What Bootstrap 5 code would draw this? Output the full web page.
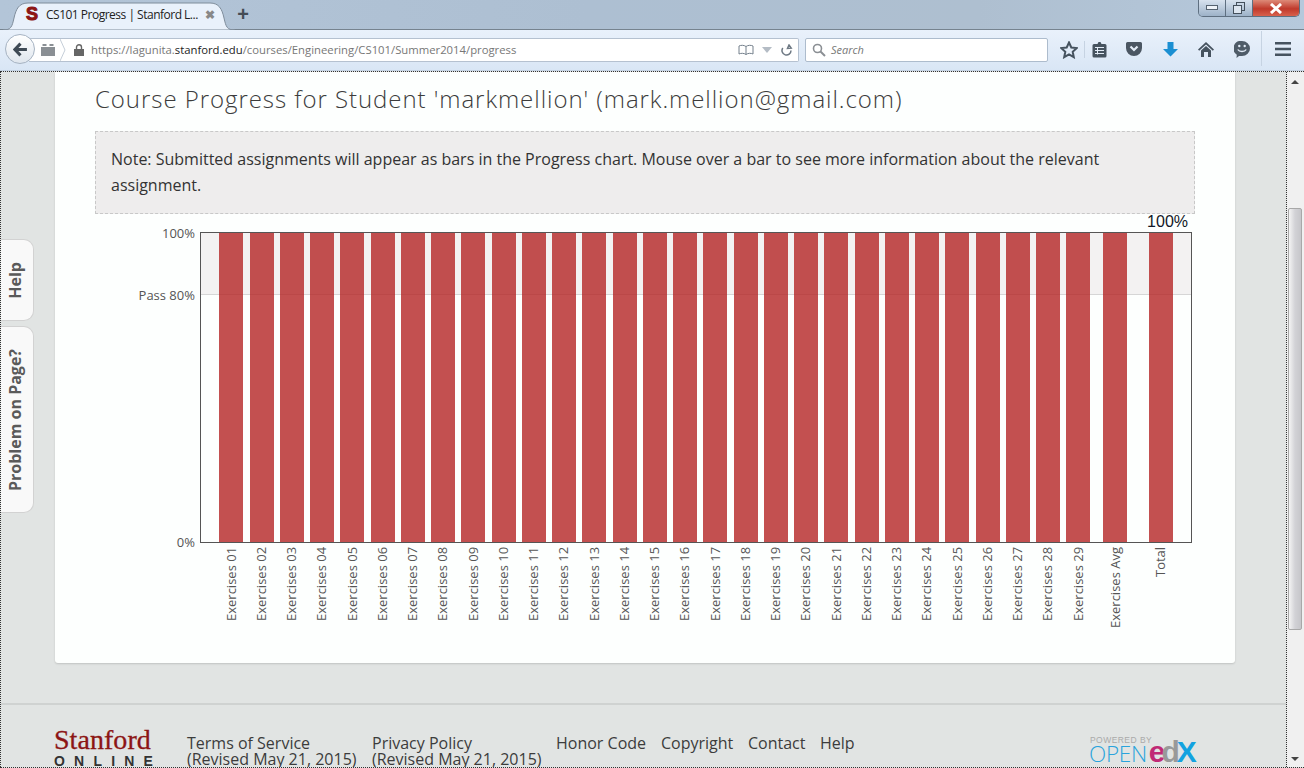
<!DOCTYPE html>
<html lang="en">
<head>
<meta charset="UTF-8" />
<title>CS101 Progress | Stanford Lagunita</title>
<link rel="stylesheet" href="https://cdn.jsdelivr.net/npm/bootstrap@5.3.7/dist/css/bootstrap.min.css" />
<style>
html, body { height: 768px; overflow: hidden; }
body { font-family: "Open Sans", sans-serif; background: #e1e4e3; color: #3c3c3c; }

/* browser frame */
.tabstrip { height: 30px; background: linear-gradient(90deg, #b3c5d8 0, #adbfd2 45%, #aebfd0 75%, #b6c9dc 100%); border-bottom: 1px solid #76838f; position: relative; }
.tab-shape { position: absolute; left: 3px; top: 1px; width: 232px; height: 29px; }
.tab-body { position: relative; width: 222px; height: 29px; margin-left: 10px; padding-left: 16px; font-size: 12px; color: #222; letter-spacing: -.5px; white-space: nowrap; }
.favicon { font: 900 18px "Liberation Sans", sans-serif; color: #8c1515; width: 12px; -webkit-text-stroke: 1px #8c1515; }
.tab-x { color: #888; font-size: 12px; font-weight: 700; margin-left: 7px; }
.newtab { position: relative; left: 23px; color: #444c55; font-size: 20px; line-height: 29px; font-family: "Liberation Sans", sans-serif; font-weight: 700; }
.winbtns { position: absolute; right: 4px; top: 0; width: 102px; height: 17px; border: 1px solid #5e6f80; border-top: 0; border-radius: 0 0 5px 5px; overflow: hidden; }
.winbtn { background: linear-gradient(#d7e2ee, #9db2c8); border-right: 1px solid #5e6f80; width: 27px; }
.winbtn-close { flex: 1; background: linear-gradient(#dd8a78, #c0392b 55%, #d8614c); border: 0; }
.toolbar { height: 41px; background: linear-gradient(#e9f1fb, #d9e6f5); border-bottom: 1px solid #c4d2e2; padding-left: 5px; position: relative; }
.backbtn { width: 30px; height: 30px; margin-top: -2px; border-radius: 50%; background: linear-gradient(#fff, #dfe6ee); border: 1px solid #a6b3c2; z-index: 1; flex: none; }
.urlbar { width: 770px; height: 24px; margin-left: -6px; background: #fff; border: 1px solid #b5c1d0; border-left: 0; border-radius: 0 2px 2px 0; font-size: 11.3px; color: #777; padding-left: 11px; white-space: nowrap; }
.urlbar b { color: #222; font-weight: 400; }
.urltext { margin-left: 7px; }
.url-tools { margin-left: auto; padding-right: 5px; }
.searchbox { width: 243px; height: 24px; margin-left: 6px; background: #fff; border: 1px solid #adbccd; border-radius: 2px; font-size: 11px; font-style: italic; color: #777; padding-left: 6px; }
.search-label { margin-left: 5px; }
.tool-ic { position: absolute; top: 11px; }
.tool-sep { position: absolute; width: 1px; background: #c6d3e2; }

/* page */
.viewport { height: 697px; border-top: 1px dotted #333; border-bottom: 1px dotted #333; }
.pagecol { width: 1287px; height: 100%; border-left: 1px dotted #333; border-right: 1px dotted #333; overflow: hidden; position: relative; flex: none; }
.sbar { width: 17px; background: #f0f0f0; }
.sb-up, .sb-down { font-size: 0; width: 0; height: 0; border: 4px solid transparent; margin-left: 4px; }
.sb-up { border-bottom: 4px solid #444; margin-top: 4px; margin-bottom: 124px; }
.sb-thumb { height: 422px; margin: 0 1px; width: 14px; border: 1px solid #a8a8a8; border-radius: 2px; background: linear-gradient(90deg, #f4f4f4, #d2d2d6 50%, #c6c6ca); }
.sb-down { border-top: 4px solid #444; margin-top: auto; margin-bottom: 2px; }
.coursebox { width: 1180px; height: 591px; margin-left: 54px; background: #fdfffe; border-radius: 0 0 3px 3px; box-shadow: 0 1px 2px rgba(0,0,0,.15); padding: 10px 40px 0; }
.coursebox h1 { font-size: 24px; font-weight: 300; letter-spacing: .95px; color: #3c3c3c; line-height: 33px; margin: 0 0 16px; white-space: nowrap; }
.notebox { height: 83px; border: 1px dashed #c8c8c8; background: #eeeded; padding: 14px 15px; font-size: 16px; line-height: 26px; color: #333; }
.totalpct { font: 16px/15px "Liberation Sans", sans-serif; color: #111827; text-align: right; width: 1093px; padding-bottom: 3px; }
.ychart { width: 1097px; }
.yaxis { width: 105px; font-size: 13px; color: #555; text-align: right; padding-right: 5px; flex: none; height: 311px; }
.yaxis div { height: 62px; line-height: 14px; margin-top: -6px; }
.yaxis div + div { height: 247px; margin-top: 0; }
.plot { width: 992px; height: 311px; border: 1px solid #555; padding-left: 18.3px; position: relative; gap: 6.25px; flex: none; }
.passband { position: absolute; left: 0; right: 0; top: 0; height: 62px; background: #f3f2f2; border-bottom: 1px solid #d6d6d6; }
.gbar { width: 24px; flex: none; background: rgba(180,36,36,.8); position: relative; }
.gap-avg { margin-left: 6.75px; }
.gap-total { margin-left: 15.15px; }
.xaxis { margin-left: 105px; padding-left: 18.6px; gap: 6.25px; padding-top: 4px; }
.xlabel { width: 24px; flex: none; font-size: 13px; color: #555; line-height: 24px; writing-mode: vertical-rl; transform: rotate(180deg); white-space: nowrap; text-align: right; height: 84px; }
.sidetab { position: absolute; left: 0; width: 33px; background: #f9f9f9; border: 1px solid #d2d2d2; border-left: 0; border-radius: 0 10px 10px 0; font-size: 16px; font-weight: 700; color: #5a5a5a; padding-right: 4px; }
.sidetab span { writing-mode: vertical-rl; transform: rotate(180deg); }
.side-help { top: 167px; height: 82px; }
.side-problem { top: 254px; height: 187px; }

/* footer */
.sitefoot { margin-top: 40px; border-top: 2px solid #cfd2d1; height: 64px; padding: 23px 0 0 53px; font-size: 16px; line-height: 16px; color: #3c3c3c; position: relative; }
.stan-logo { width: 133px; flex: none; }
.stan-name { font: 28px/24px "Liberation Serif", serif; color: #8c1515; letter-spacing: .05px; -webkit-text-stroke: .3px #8c1515; }
.stan-online { font: 700 14px/14px "Liberation Sans", sans-serif; color: #333; letter-spacing: 9.2px; margin-top: 2px; white-space: nowrap; }
.foot-link { margin-top: 7px; white-space: nowrap; }
.edx-logo { position: absolute; left: 1088px; top: 30px; width: 112px; }
.edx-top { font: 8.5px/10px "Liberation Sans", sans-serif; color: #aaa; letter-spacing: .45px; padding-left: 1px; }
.edx-word { font: 300 22.5px/20px "Open Sans", sans-serif; color: #29a3dc; letter-spacing: -.3px; white-space: nowrap; margin-top: -3px; }
.edx-word .e1, .edx-word .e2, .edx-word .e3 { font-family: "Liberation Sans", sans-serif; font-weight: 700; font-size: 30px; letter-spacing: 0; }
.edx-word .e1 { color: #c02a75; margin-left: 2px; }
.edx-word .e2 { color: #999; margin-left: -4px; }
.edx-word .e3 { color: #12a2e0; margin-left: -3px; }
</style>
</head>
<body>
  <header>
    <div class="tabstrip">
      <svg class="tab-shape" viewBox="0 0 232 29"><path d="M0 29c8 0 9-3 11-12 2-9 5-15 14-15h182c9 0 12 6 14 15 2 9 3 12 11 12z" fill="#e9f1fb" stroke="#7f8d9b"/></svg>
      <div class="tab-body d-flex align-items-center">
        <span class="favicon">S</span>
        <span class="ms-2">CS101 Progress | Stanford L...</span>
        <span class="tab-x">✖</span>
        <span class="newtab">+</span>
      </div>
      <div class="winbtns d-flex">
        <div class="winbtn d-flex align-items-center justify-content-center"><svg width="12" height="6"><rect x=".5" y=".5" width="11" height="4" fill="#eef3f8" stroke="#55626f"/></svg></div>
        <div class="winbtn d-flex align-items-center justify-content-center"><svg width="12" height="12"><rect x="3.5" y=".5" width="8" height="8" fill="none" stroke="#44505c"/><rect x=".5" y="3.5" width="8" height="8" fill="#dce5ef" stroke="#44505c"/></svg></div>
        <div class="winbtn winbtn-close d-flex align-items-center justify-content-center"><svg width="14" height="11"><path d="M2 1l10 9M12 1L2 10" stroke="#fff" stroke-width="3"/></svg></div>
      </div>
    </div>
    <div class="toolbar d-flex align-items-center">
      <div class="backbtn d-flex align-items-center justify-content-center">
        <svg width="15" height="15" viewBox="0 0 14 14"><path d="M7 1.500L1.800 7 7 12.500M2 7h11" fill="none" stroke="#3f4a55" stroke-width="2.800"/></svg>
      </div>
      <div class="urlbar d-flex align-items-center">
        <svg width="16" height="14" viewBox="0 0 16 14"><path d="M1 4h14v9H1zM2.500 1h4v2h-4zM9.500 1h4v2h-4z" fill="#8a8f94"/></svg>
        <svg width="6" height="24" viewBox="0 0 6 24" class="ms-1"><path d="M0 1l5 11-5 11" fill="none" stroke="#c5ced8"/></svg>
        <svg width="10" height="12" viewBox="0 0 10 12" class="ms-2"><path d="M0 5h10v7H0z" fill="#666"/><path d="M2.500 5V3.300a2.500 2.500 0 015 0V5" fill="none" stroke="#666" stroke-width="1.400"/></svg>
        <span class="urltext">https://lagunita.<b>stanford.edu</b>/courses/Engineering/CS101/Summer2014/progress</span>
        <span class="url-tools d-flex align-items-center gap-2">
          <svg width="16" height="12" viewBox="0 0 16 12"><path d="M8 2.500C6 1 3 1 1 2v8c2-1 5-1 7 .5 2-1.500 5-1.500 7-.5V2c-2-1-5-1-7 .5zM8 2.500v8" fill="none" stroke="#74808c"/></svg>
          <svg width="10" height="6" viewBox="0 0 10 6"><path d="M0 0h10L5 6z" fill="#b4bcc5"/></svg>
          <svg width="13" height="13" viewBox="0 0 13 13"><path d="M11 6.500A4.500 4.500 0 112.800 4M9 1l2.200 3.200L7.500 4.500z" fill="none" stroke="#6d7883" stroke-width="1.500"/></svg>
        </span>
      </div>
      <div class="searchbox d-flex align-items-center">
        <svg width="14" height="14" viewBox="0 0 14 14"><circle cx="5.500" cy="5.500" r="4" fill="none" stroke="#8b8f94" stroke-width="1.600"/><path d="M8.500 8.500l4.500 4.500" stroke="#8b8f94" stroke-width="2"/></svg>
        <span class="search-label">Search</span>
      </div>
      <svg class="tool-ic" style="left:1060px" width="18" height="18" viewBox="0 0 18 18"><path d="M9 1.500l2.300 5 5.400.6-4 3.700 1.100 5.400L9 13.500l-4.800 2.700 1.100-5.400-4-3.700 5.400-.6z" fill="none" stroke="#46535f" stroke-width="2"/></svg>
      <i class="tool-sep" style="left:1084px;top:11px;height:17px"></i>
      <svg class="tool-ic" style="left:1092px" width="15" height="18" viewBox="0 0 15 18"><path d="M2 3h3.500l1-2h2l1 2H13a1.500 1.500 0 011.500 1.500V15A1.500 1.500 0 0113 16.500H2A1.500 1.500 0 01.500 15V4.500A1.500 1.500 0 012 3z" fill="#46535f"/><path d="M3 6.500h9M3 9.500h9M3 12.500h9M5.500 6v7.500" stroke="#e3ecf7"/></svg>
      <svg class="tool-ic" style="left:1126px" width="16" height="16" viewBox="0 0 16 16"><path d="M1.500 1h13A1.500 1.500 0 0116 2.500V7A8 8 0 010 7V2.500A1.500 1.500 0 011.500 1z" fill="#4b5662"/><path d="M4.500 5.500L8 9l3.500-3.500" fill="none" stroke="#e3ecf7" stroke-width="2.200"/></svg>
      <svg class="tool-ic" style="left:1163px;top:12px" width="15" height="15" viewBox="0 0 15 15"><path d="M4.500 0h6v7h4.500l-7.500 7.500L0 7h4.500z" fill="#1b8fd2"/></svg>
      <svg class="tool-ic" style="left:1198px;top:12px" width="16" height="15" viewBox="0 0 16 15"><path d="M8 0L0 7.500l1.200 1.200L8 2.400l6.800 6.300L16 7.500z" fill="#46535f"/><path d="M3 8.500L8 4l5 4.500V15H10v-5H6v5H3z" fill="#46535f"/></svg>
      <svg class="tool-ic" style="left:1234px" width="16" height="17" viewBox="0 0 16 17"><path d="M8 0a8 7.500 0 110 15H5l-2.500 2 .3-3.300A7.500 7.500 0 018 0z" fill="#4f5c68"/><circle cx="5.300" cy="5" r="1.200" fill="#e3ecf7"/><circle cx="10.700" cy="5" r="1.200" fill="#e3ecf7"/><path d="M3.800 8.500c1.500 2.600 6.900 2.600 8.400 0" fill="none" stroke="#e3ecf7" stroke-width="1.400"/></svg>
      <i class="tool-sep" style="left:1261px;top:1px;height:35px"></i>
      <svg class="tool-ic" style="left:1275px;top:12px" width="16" height="14" viewBox="0 0 16 14"><path d="M0 1.200h16M0 7h16M0 12.800h16" stroke="#46535f" stroke-width="2.400"/></svg>
    </div>
  </header>

  <div class="viewport d-flex">
    <div class="pagecol">
      <main class="coursebox">
        <h1>Course Progress for Student 'markmellion' (mark.mellion@gmail.com)</h1>
        <div class="notebox">Note: Submitted assignments will appear as bars in the Progress chart. Mouse over a bar to see more information about the relevant assignment.</div>
        <div class="totalpct">100%</div>
        <div class="ychart d-flex">
          <div class="yaxis">
            <div>100%</div>
            <div>Pass 80%</div>
            <div>0%</div>
          </div>
          <div class="plot d-flex" id="plot"><div class="passband"></div></div>
        </div>
        <div class="xaxis d-flex" id="xaxis"></div>
      </main>
      <footer class="sitefoot d-flex">
        <div class="stan-logo">
          <div class="stan-name">Stanford</div>
          <div class="stan-online">ONLINE</div>
        </div>
        <div class="foot-link" style="width:185px">Terms of Service<br>(Revised May 21, 2015)</div>
        <div class="foot-link" style="width:184px">Privacy Policy<br>(Revised May 21, 2015)</div>
        <div class="foot-link" style="width:105px">Honor Code</div>
        <div class="foot-link" style="width:87px">Copyright</div>
        <div class="foot-link" style="width:72px">Contact</div>
        <div class="foot-link">Help</div>
        <div class="edx-logo">
          <div class="edx-top">POWERED BY</div>
          <div class="edx-word">OPEN<span class="e1">e</span><span class="e2">d</span><span class="e3">X</span></div>
        </div>
      </footer>
      <a class="sidetab side-help d-flex align-items-center justify-content-center text-decoration-none"><span>Help</span></a>
      <a class="sidetab side-problem d-flex align-items-center justify-content-center text-decoration-none"><span>Problem on Page?</span></a>
    </div>
    <div class="sbar d-flex flex-column">
      <div class="sb-up"></div>
      <div class="sb-thumb"></div>
      <div class="sb-down"></div>
    </div>
  </div>

  <script src="https://cdn.jsdelivr.net/npm/bootstrap@5.3.7/dist/js/bootstrap.bundle.min.js"></script>
  <script>
    let plot = document.getElementById('plot')
    let xaxis = document.getElementById('xaxis')
    function addBar(name, extra) {
      let bar = document.createElement('div')
      bar.className = 'gbar ' + extra
      plot.appendChild(bar)
      let label = document.createElement('div')
      label.className = 'xlabel ' + extra
      label.textContent = name
      xaxis.appendChild(label)
    }
    for (let i = 1; i <= 29; i++) {
      addBar('Exercises ' + String(i).padStart(2, '0'), '')
    }
    addBar('Exercises Avg', 'gap-avg')
    addBar('Total', 'gap-total')
  </script>
</body>
</html>
